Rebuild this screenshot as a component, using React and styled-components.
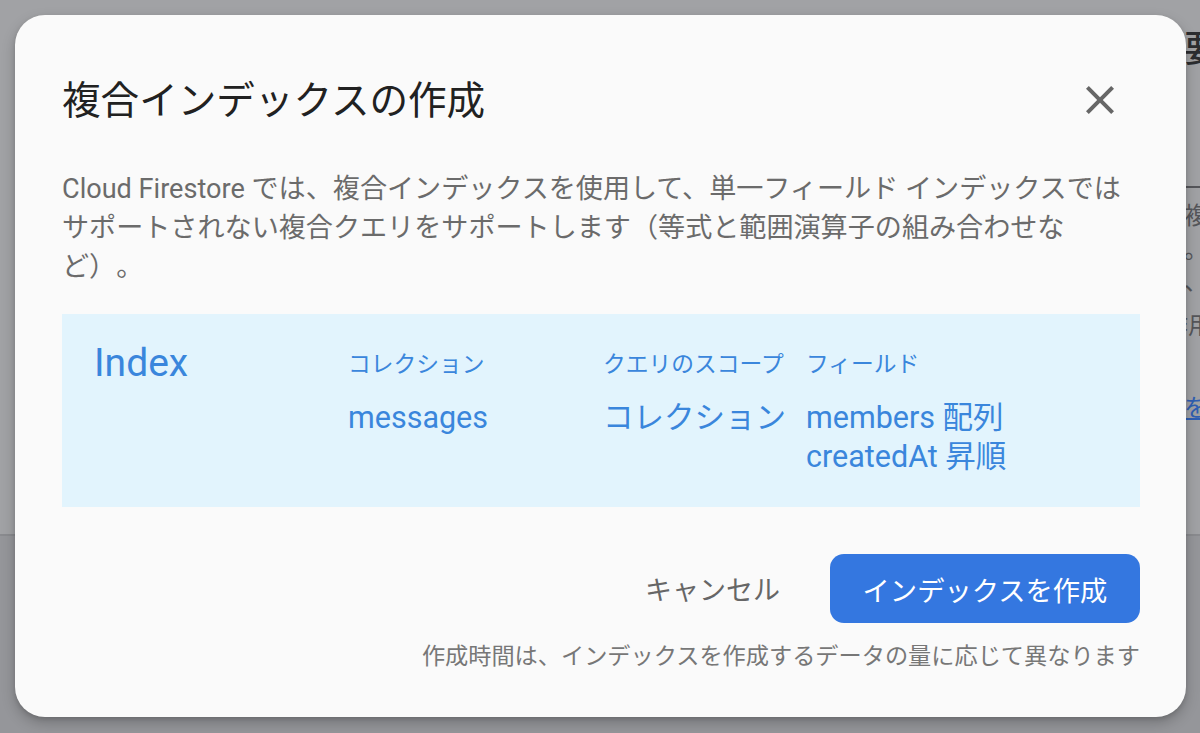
import React from "react";
import styled, { createGlobalStyle } from "styled-components";

const Global = createGlobalStyle`
  html, body {
    margin: 0;
    padding: 0;
    width: 1200px;
    height: 733px;
    overflow: hidden;
  }
  body {
    font-family: Roboto, "Noto Sans CJK JP", sans-serif;
    text-spacing-trim: space-all;
  }
  * { box-sizing: border-box; }
`;

const Page = styled.div`
  position: relative;
  width: 1200px;
  height: 733px;
  overflow: hidden;
  background: #95969a;
  display: flex;
  flex-direction: column;
`;

const PageTop = styled.div`
  height: 536px;
  background: #a1a2a5;
  border-bottom: 2px solid #8a8b8f;
  display: flex;
  justify-content: flex-start;
  padding-left: 1184px;
`;

const PageColumn = styled.div`
  width: 600px;
  display: flex;
  flex-direction: column;
  white-space: nowrap;
`;

const PageHeading = styled.div`
  margin-top: 24px;
  font-family: "Noto Sans CJK JP", sans-serif;
  font-size: 36px;
  line-height: 44px;
  font-weight: 500;
  color: #2c2d30;
`;

const PageLine = styled.div`
  margin-top: ${(p) => p.$gap}px;
  margin-left: ${(p) => p.$shift || 0}px;
  font-family: "Noto Sans CJK JP", sans-serif;
  font-size: 24px;
  line-height: 32px;
  color: #55565a;
`;

const PageLink = styled(PageLine)`
  color: #2f5fb3;
  text-decoration: underline;
`;

const Dialog = styled.div`
  position: absolute;
  left: 15px;
  top: 15px;
  width: 1171px;
  height: 702px;
  background: #fafafa;
  border-radius: 30px;
  box-shadow: 0 6px 14px rgba(0, 0, 0, 0.22), 0 2px 4px rgba(0, 0, 0, 0.12);
  padding: 58px 46px 0 47px;
  display: flex;
  flex-direction: column;
`;

const Header = styled.div`
  display: flex;
  align-items: center;
  justify-content: space-between;
`;

const Title = styled.h1`
  margin: 0;
  font-family: "Noto Sans CJK JP", sans-serif;
  font-weight: 400;
  font-size: 38.6px;
  line-height: 46px;
  color: #212121;
`;

const CloseButton = styled.button`
  border: none;
  background: none;
  padding: 0;
  margin: 3px 16px -3px 0;
  width: 48px;
  height: 48px;
  display: flex;
  align-items: center;
  justify-content: center;
  cursor: pointer;
  color: #666666;
`;

const Description = styled.p`
  margin: 49px 0 0 0;
  font-size: 27.1px;
  line-height: 39px;
  color: #6b6b6b;
`;

const IndexBox = styled.div`
  margin-top: 27px;
  background: #e2f4fd;
  padding: 33px 32px 31px 32px;
  display: flex;
  align-items: flex-start;
  color: #3a86dc;
`;

const IndexTitle = styled.div`
  width: 254px;
  flex: none;
  font-size: 39px;
  line-height: 32px;
`;

const Field = styled.div`
  display: flex;
  flex-direction: column;
  flex: ${(p) => (p.$grow ? "1 1 auto" : "none")};
  width: ${(p) => (p.$w ? `${p.$w}px` : "auto")};
  padding-right: ${(p) => p.$pr || 0}px;
`;

const FieldLabel = styled.div`
  font-family: "Noto Sans CJK JP", sans-serif;
  font-size: 22.75px;
  line-height: 32px;
  white-space: nowrap;
`;

const FieldValue = styled.div`
  margin-top: 19px;
  font-size: 30.5px;
  line-height: 39px;
  white-space: nowrap;
`;

const ValueLine = styled.div``;

const Actions = styled.div`
  margin-top: 47px;
  display: flex;
  justify-content: flex-end;
  align-items: center;
  gap: 26px;
`;

const TextButton = styled.button`
  border: none;
  background: none;
  height: 69px;
  padding: 0 24px;
  font-family: "Noto Sans CJK JP", sans-serif;
  font-size: 27px;
  color: #666666;
  cursor: pointer;
`;

const PrimaryButton = styled.button`
  border: none;
  height: 69px;
  width: 310px;
  border-radius: 14px;
  background: #3477e0;
  color: #ffffff;
  font-family: "Noto Sans CJK JP", sans-serif;
  font-size: 27.3px;
  cursor: pointer;
`;

const Note = styled.div`
  margin-top: 15px;
  text-align: right;
  font-family: "Noto Sans CJK JP", sans-serif;
  font-size: 23.2px;
  line-height: 32px;
  color: #777777;
  white-space: nowrap;
`;

function CloseIcon() {
  return (
    <svg width="48" height="48" viewBox="0 0 24 24" fill="currentColor">
      <path d="M19 6.41 17.59 5 12 10.59 6.41 5 5 6.41 10.59 12 5 17.59 6.41 19 12 13.41 17.59 19 19 17.59 13.41 12z" />
    </svg>
  );
}

export default function App() {
  return (
    <>
      <Global />
      <Page>
        <PageTop>
          <PageColumn>
            <PageHeading>要件</PageHeading>
            <PageLine $gap={102}>一致</PageLine>
            <PageLine $gap={-4}>複合</PageLine>
            <PageLine $gap={2}>。</PageLine>
            <PageLine $gap={0}>、ソ</PageLine>
            <PageLine $gap={12} $shift={-20}>作用</PageLine>
            <PageLink $gap={50}>を参照</PageLink>
          </PageColumn>
        </PageTop>
        <Dialog>
          <Header>
            <Title>複合インデックスの作成</Title>
            <CloseButton aria-label="閉じる">
              <CloseIcon />
            </CloseButton>
          </Header>
          <Description>
            Cloud Firestore では、複合インデックスを使用して、単一フィールド インデックスではサポートされない複合クエリをサポートします（等式と範囲演算子の組み合わせなど）。
          </Description>
          <IndexBox>
            <IndexTitle>Index</IndexTitle>
            <Field $w={255}>
              <FieldLabel>コレクション</FieldLabel>
              <FieldValue>messages</FieldValue>
            </Field>
            <Field $pr={20}>
              <FieldLabel>クエリのスコープ</FieldLabel>
              <FieldValue>コレクション</FieldValue>
            </Field>
            <Field $grow>
              <FieldLabel>フィールド</FieldLabel>
              <FieldValue>
                <ValueLine>members 配列</ValueLine>
                <ValueLine>createdAt 昇順</ValueLine>
              </FieldValue>
            </Field>
          </IndexBox>
          <Actions>
            <TextButton>キャンセル</TextButton>
            <PrimaryButton>インデックスを作成</PrimaryButton>
          </Actions>
          <Note>作成時間は、インデックスを作成するデータの量に応じて異なります</Note>
        </Dialog>
      </Page>
    </>
  );
}
